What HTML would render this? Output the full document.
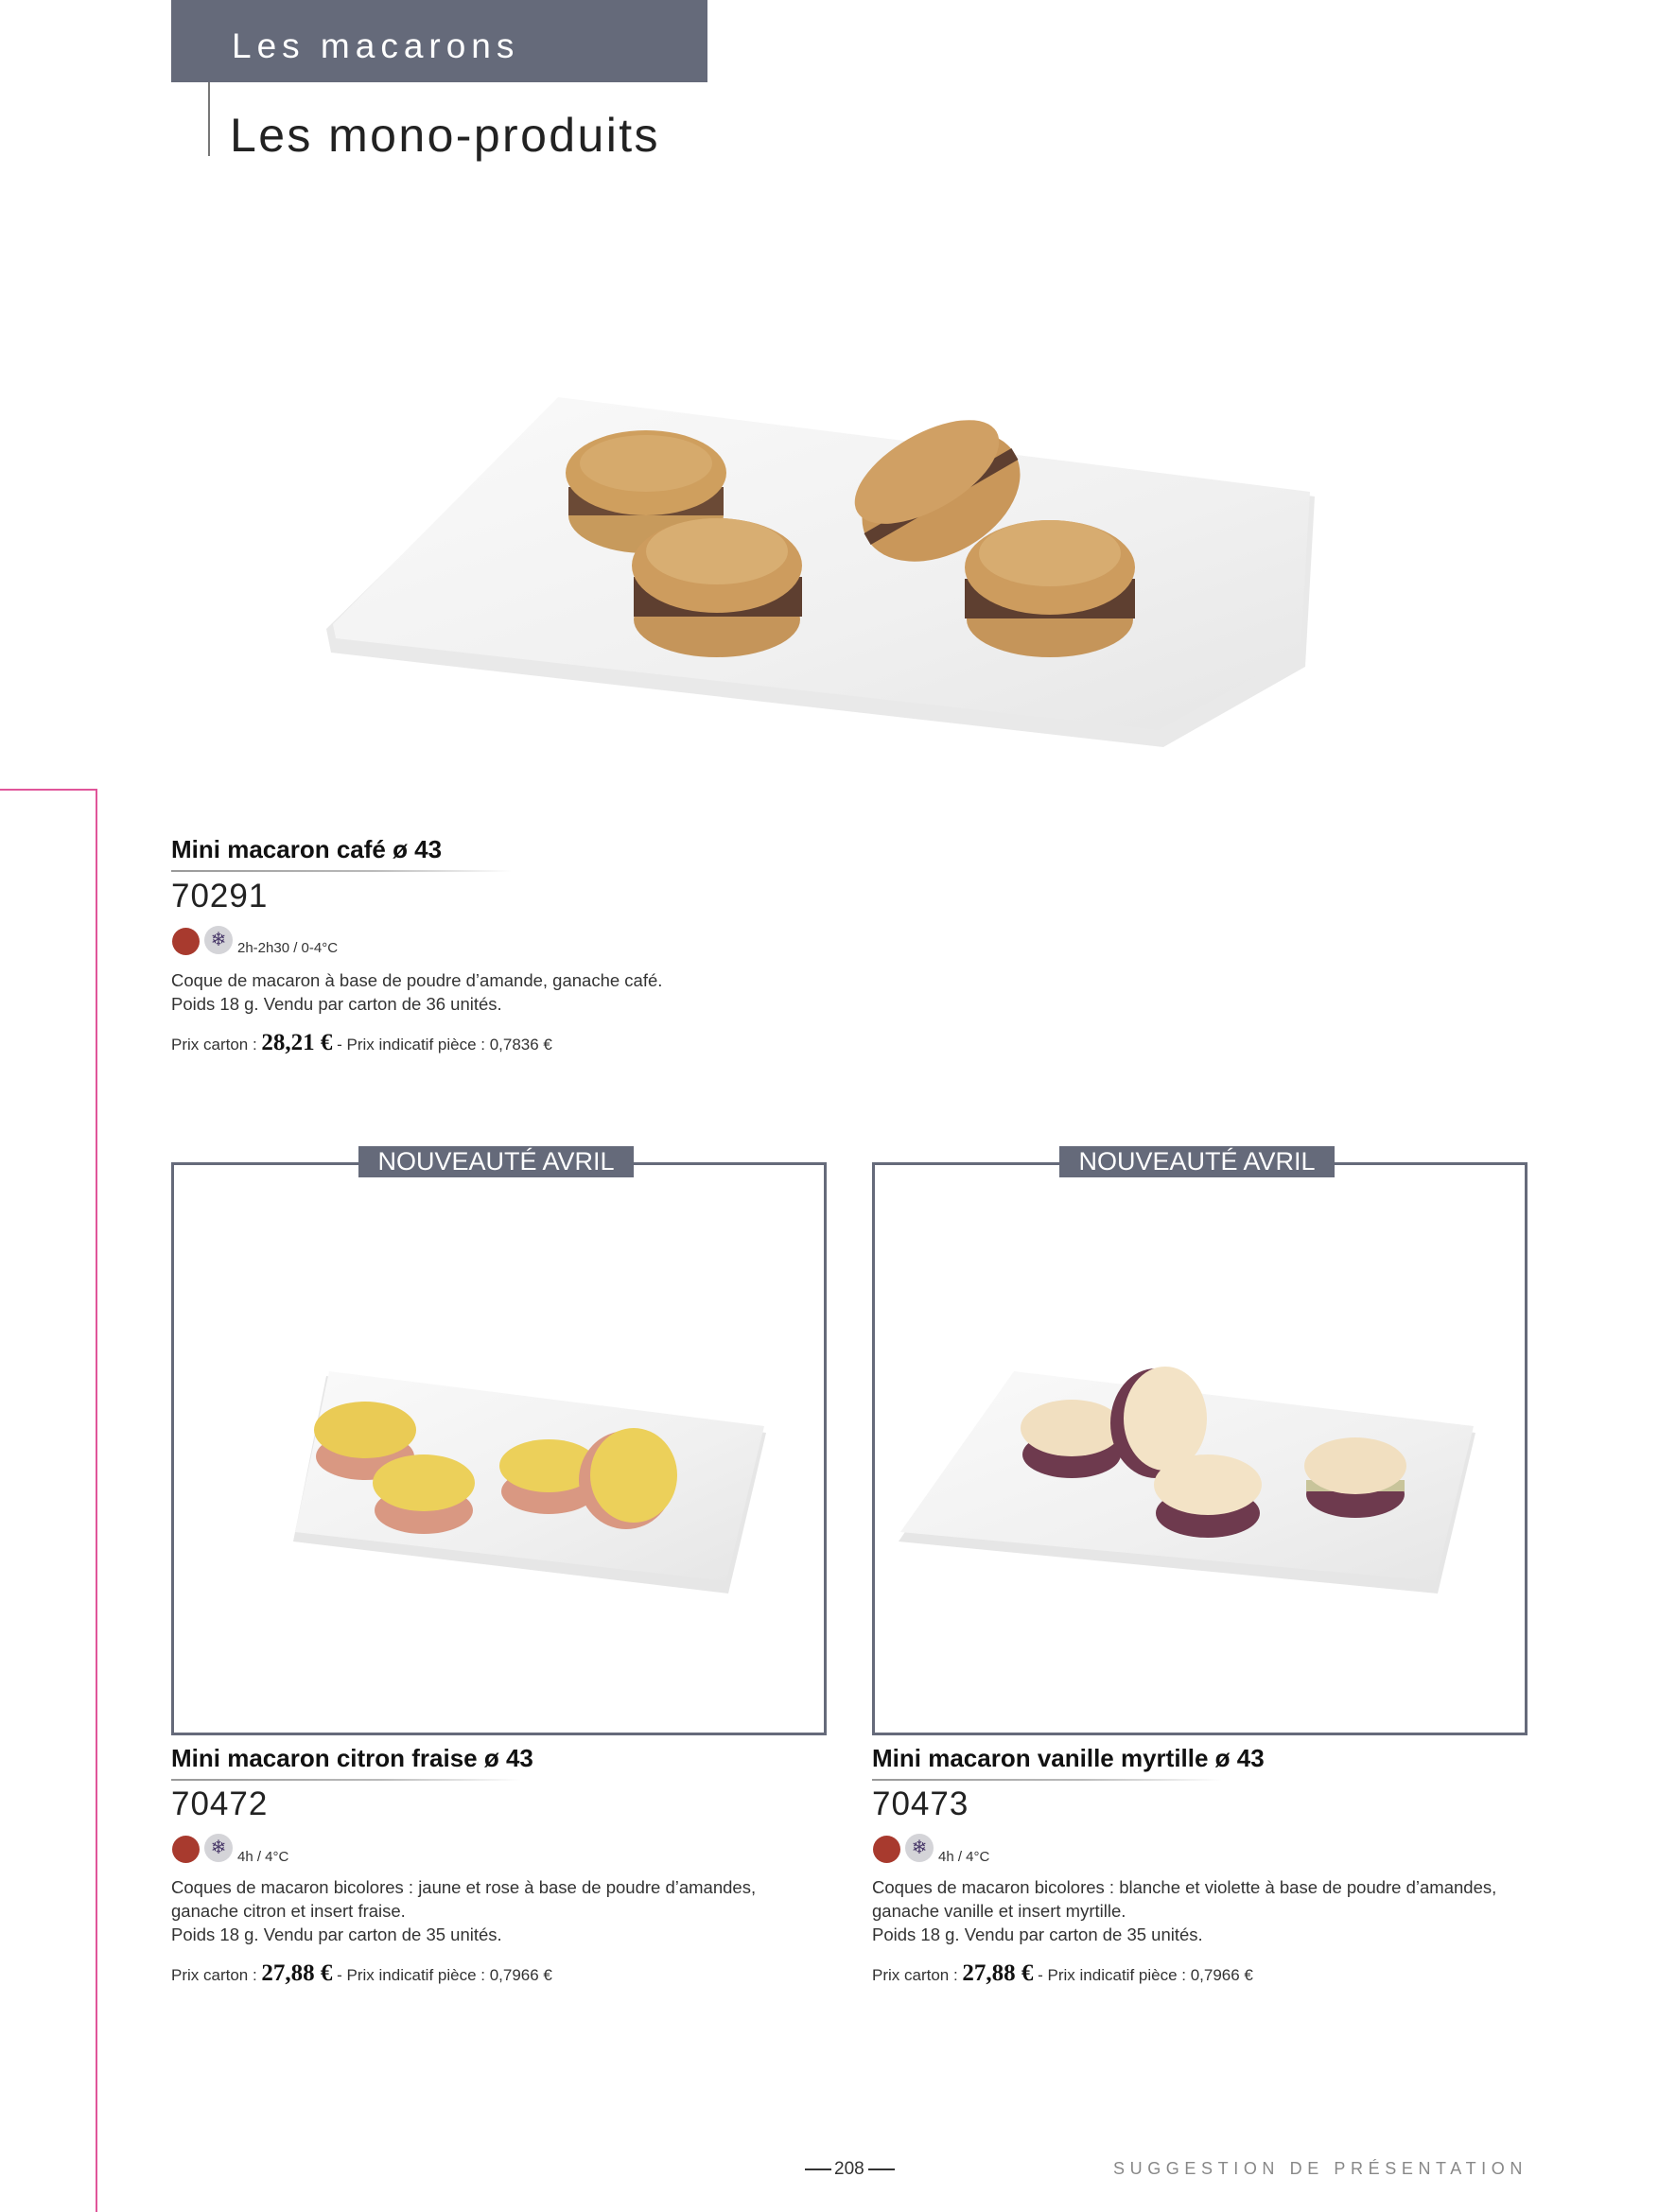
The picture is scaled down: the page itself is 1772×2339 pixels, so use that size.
<!DOCTYPE html>
<html><head><meta charset="utf-8"><style>
*{margin:0;padding:0;box-sizing:border-box}
body{width:1772px;height:2339px;position:relative;background:#fff;font-family:"Liberation Sans",sans-serif;color:#1a1a1a;overflow:hidden}
.a{position:absolute;white-space:nowrap}
.title{font-weight:bold;font-size:26px;color:#111}
.code{font-size:35px;color:#222;letter-spacing:1px}
.desc{font-size:18.5px;line-height:25px;color:#333}
.small{font-size:15px;color:#333}
.price{font-size:17px;color:#333}
.price b{font-size:25px;font-family:"Liberation Serif",serif;color:#111}
.ul{position:absolute;height:2px;background:linear-gradient(90deg,#999,#bbb 60%,rgba(255,255,255,0))}
.dot{position:absolute;width:29px;height:29px;border-radius:50%;background:#a83a2e}
.snow{position:absolute;width:30px;height:30px;border-radius:50%;background:#d4d4d8;color:#4a3a6a;font-size:20px;line-height:30px;text-align:center}
.badge{position:absolute;background:#656a7a;color:#fff;font-size:27px;height:33px;line-height:33px;text-align:center}
</style></head><body>

<div class="a" style="left:181px;top:0;width:567px;height:87px;background:#656a7a"></div>
<div class="a" style="left:245px;top:28px;font-size:37px;color:#fff;letter-spacing:6px">Les macarons</div>
<div class="a" style="left:220px;top:87px;width:2px;height:78px;background:#777"></div>
<div class="a" style="left:243px;top:114px;font-size:50px;color:#222;letter-spacing:2.4px">Les mono-produits</div>

<div class="a" style="left:0;top:834px;width:103px;height:2px;background:#e0559a"></div>
<div class="a" style="left:101px;top:834px;width:2px;height:1505px;background:#e0559a"></div>

<svg class="a" style="left:0;top:0" width="1772" height="2339" viewBox="0 0 1772 2339">
<defs>
<linearGradient id="pl" x1="0" y1="0" x2="1" y2="1"><stop offset="0" stop-color="#fafafa"/><stop offset="0.6" stop-color="#f0f0f0"/><stop offset="1" stop-color="#e6e6e6"/></linearGradient>
</defs>
<polygon points="590,425 1390,525 1380,705 1230,790 350,690 345,665" fill="#e9e9e9"/>
<polygon points="590,420 1385,520 1375,690 1225,772 355,675 352,660" fill="url(#pl)"/>
<g>
<ellipse cx="683" cy="545" rx="82" ry="40" fill="#c79a5c"/><rect x="601" y="515" width="164" height="30" fill="#6b4a36"/><ellipse cx="683" cy="500" rx="85" ry="45" fill="#cf9f5e"/><ellipse cx="683" cy="490" rx="70" ry="30" fill="#d6aa6c"/>
<ellipse cx="1110" cy="655" rx="88" ry="40" fill="#c5955a"/><rect x="1020" y="612" width="180" height="42" fill="#5e3f30"/><ellipse cx="1110" cy="600" rx="90" ry="50" fill="#cd9c5e"/><ellipse cx="1110" cy="585" rx="75" ry="35" fill="#d7ac70"/>
<g transform="rotate(-30 995 525)"><ellipse cx="995" cy="525" rx="90" ry="60" fill="#c9975a"/><rect x="905" y="518" width="180" height="14" fill="#5e3f30"/><ellipse cx="995" cy="495" rx="85" ry="40" fill="#d0a064"/></g>
<ellipse cx="758" cy="655" rx="88" ry="40" fill="#c5955a"/><rect x="670" y="610" width="178" height="42" fill="#5e3f30"/><ellipse cx="758" cy="598" rx="90" ry="50" fill="#cd9c5e"/><ellipse cx="758" cy="583" rx="75" ry="35" fill="#d8ae72"/>
</g>

<rect x="182.5" y="1230.5" width="690" height="603" fill="none" stroke="#656a7a" stroke-width="3"/>
<rect x="923.5" y="1230.5" width="690" height="603" fill="none" stroke="#656a7a" stroke-width="3"/>
<polygon points="345,1455 810,1515 770,1685 310,1630" fill="#e6e6e6"/>
<polygon points="348,1450 808,1508 768,1672 312,1620" fill="url(#pl)"/>
<g>
<ellipse cx="386" cy="1540" rx="52" ry="25" fill="#d99882"/><ellipse cx="386" cy="1512" rx="54" ry="30" fill="#eacb55"/>
<ellipse cx="448" cy="1597" rx="52" ry="25" fill="#d99882"/><ellipse cx="448" cy="1568" rx="54" ry="30" fill="#ecd05a"/>
<ellipse cx="580" cy="1577" rx="50" ry="24" fill="#d99882"/><ellipse cx="580" cy="1550" rx="52" ry="28" fill="#ecd05a"/>
<ellipse cx="662" cy="1565" rx="50" ry="52" fill="#d99882"/><ellipse cx="670" cy="1560" rx="46" ry="50" fill="#ecd05a"/>
</g>
<polygon points="1070,1455 1560,1515 1520,1685 950,1630" fill="#e6e6e6"/>
<polygon points="1072,1450 1558,1508 1518,1672 952,1620" fill="url(#pl)"/>
<g>
<ellipse cx="1133" cy="1538" rx="52" ry="25" fill="#6e3a4e"/><ellipse cx="1133" cy="1510" rx="54" ry="30" fill="#f1dfc0"/>
<ellipse cx="1222" cy="1505" rx="48" ry="58" fill="#6e3a4e"/><ellipse cx="1232" cy="1500" rx="44" ry="55" fill="#f3e3c6"/>
<ellipse cx="1277" cy="1600" rx="55" ry="26" fill="#6e3a4e"/><ellipse cx="1277" cy="1570" rx="57" ry="32" fill="#f3e3c6"/>
<ellipse cx="1433" cy="1580" rx="52" ry="25" fill="#6e3a4e"/><rect x="1381" y="1565" width="104" height="12" fill="#c8c49a"/><ellipse cx="1433" cy="1550" rx="54" ry="30" fill="#f1dfc0"/>
</g>
</svg>

<div class="badge" style="left:379px;top:1212px;width:291px">NOUVEAUTÉ AVRIL</div>
<div class="badge" style="left:1120px;top:1212px;width:291px">NOUVEAUTÉ AVRIL</div>

<div class="a title" style="left:181px;top:883px">Mini macaron café ø 43</div>
<div class="ul" style="left:181px;top:920px;width:360px"></div>
<div class="a code" style="left:181px;top:928px">70291</div>
<div class="dot" style="left:182px;top:981px"></div>
<div class="snow" style="left:216px;top:979px">❄</div>
<div class="a small" style="left:251px;top:994px">2h-2h30 / 0-4°C</div>
<div class="a desc" style="left:181px;top:1024px">Coque de macaron à base de poudre d’amande, ganache café.<br>Poids 18 g. Vendu par carton de 36 unités.</div>
<div class="a price" style="left:181px;top:1089px">Prix carton : <b>28,21 €</b> - Prix indicatif pièce : 0,7836 €</div>

<div class="a title" style="left:181px;top:1844px">Mini macaron citron fraise ø 43</div>
<div class="ul" style="left:181px;top:1881px;width:370px"></div>
<div class="a code" style="left:181px;top:1888px">70472</div>
<div class="dot" style="left:182px;top:1941px"></div>
<div class="snow" style="left:216px;top:1939px">❄</div>
<div class="a small" style="left:251px;top:1955px">4h / 4°C</div>
<div class="a desc" style="left:181px;top:1983px">Coques de macaron bicolores : jaune et rose à base de poudre d’amandes,<br>ganache citron et insert fraise.<br>Poids 18 g. Vendu par carton de 35 unités.</div>
<div class="a price" style="left:181px;top:2073px">Prix carton : <b>27,88 €</b> - Prix indicatif pièce : 0,7966 €</div>

<div class="a title" style="left:922px;top:1844px">Mini macaron vanille myrtille ø 43</div>
<div class="ul" style="left:922px;top:1881px;width:370px"></div>
<div class="a code" style="left:922px;top:1888px">70473</div>
<div class="dot" style="left:923px;top:1941px"></div>
<div class="snow" style="left:957px;top:1939px">❄</div>
<div class="a small" style="left:992px;top:1955px">4h / 4°C</div>
<div class="a desc" style="left:922px;top:1983px">Coques de macaron bicolores : blanche et violette à base de poudre d’amandes,<br>ganache vanille et insert myrtille.<br>Poids 18 g. Vendu par carton de 35 unités.</div>
<div class="a price" style="left:922px;top:2073px">Prix carton : <b>27,88 €</b> - Prix indicatif pièce : 0,7966 €</div>

<div class="a" style="left:851px;top:2293px;width:28px;height:2px;background:#333"></div>
<div class="a" style="left:882px;top:2283px;font-size:19px;color:#333">208</div>
<div class="a" style="left:918px;top:2293px;width:28px;height:2px;background:#333"></div>
<div class="a" style="left:1177px;top:2283px;font-size:18px;color:#888;letter-spacing:5.6px">SUGGESTION DE PRÉSENTATION</div>
</body></html>
